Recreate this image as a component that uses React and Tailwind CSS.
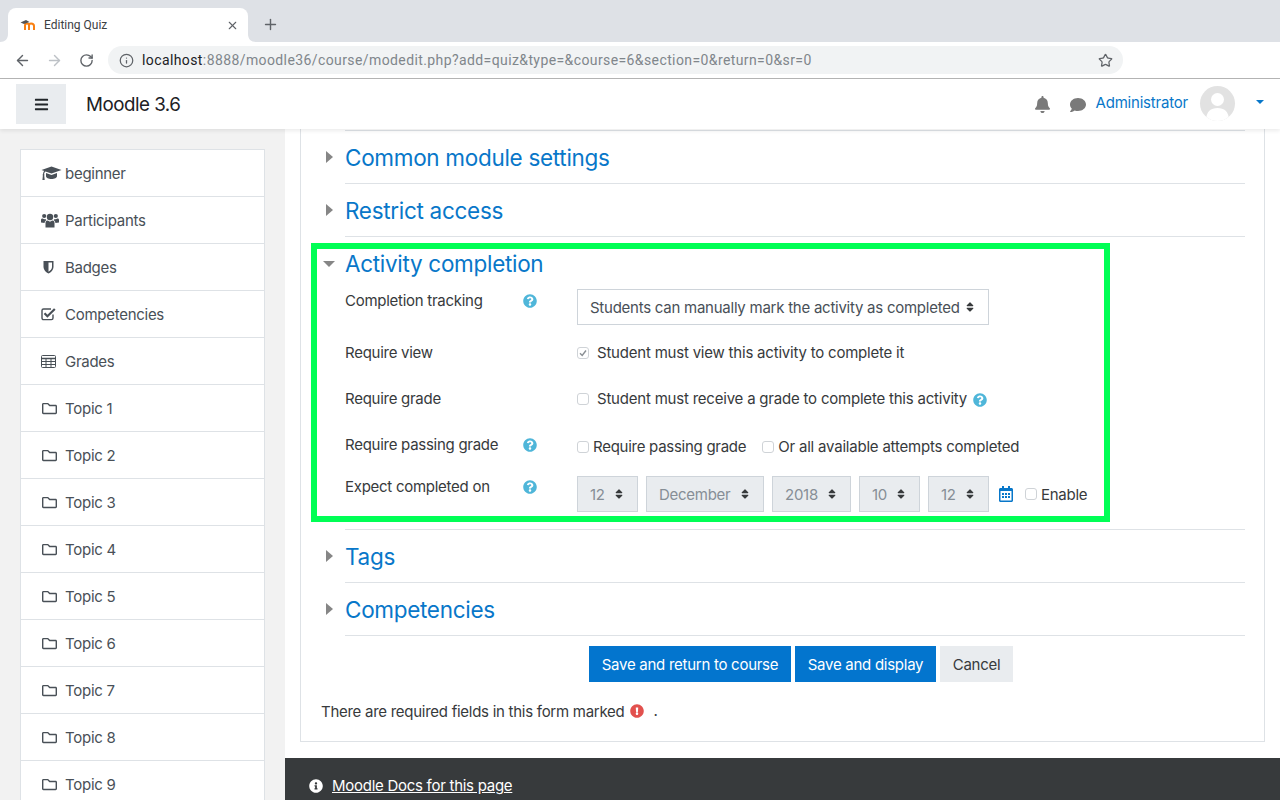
import {
  FaBars,
  FaBell,
  FaComment,
  FaExclamationCircle,
  FaInfoCircle,
  FaQuestionCircle,
  FaRegCalendarAlt,
  FaRegFolder,
  FaSort,
} from "react-icons/fa";
import { ArrowLeft, ArrowRight, Info, Plus, RotateCw, Star, X } from "lucide-react";

const CapIcon = () => (
  <svg width="21" height="15" viewBox="0 0 21 15" fill="#495057">
    <path d="M0.5 4 10.5 0.5 20.5 4 10.5 7.5 4.5 5.4C3.6 6 3.2 7 3.1 8.3 3.6 8.6 3.6 9.2 3.2 9.5L3.7 14H1.4L1.9 9.5C1.5 9.2 1.5 8.6 2 8.3 2.1 6.8 2.5 5.7 3.3 5Z" />
    <path d="M5 7 10.5 9 16 7V10.2C16 11.8 13.5 13 10.5 13S5 11.8 5 10.2Z" />
  </svg>
);

const UsersIcon = () => (
  <svg width="18" height="15" viewBox="0 0 18 15" fill="#495057">
    <circle cx="9" cy="4" r="3.2" />
    <circle cx="3.2" cy="3" r="2.1" />
    <circle cx="14.8" cy="3" r="2.1" />
    <path d="M4.5 14.5V10C4.5 8.2 5.6 7.5 6.8 7.5L9 8.8 11.2 7.5C12.4 7.5 13.5 8.2 13.5 10V14.5Z" />
    <path d="M0 9.5V7C0 6 .8 5.6 1.6 5.6L3.2 6.3 4.4 6.1C4.8 6.8 5 7 5.4 7.2 4.2 7.6 3.7 8.6 3.6 10Z" />
    <path d="M18 9.5V7C18 6 17.2 5.6 16.4 5.6L14.8 6.3 13.6 6.1C13.2 6.8 13 7 12.6 7.2 13.8 7.6 14.3 8.6 14.4 10Z" />
  </svg>
);

const ShieldIcon = () => (
  <svg width="11" height="14" viewBox="0 0 11 14">
    <path d="M0.5 1H10.5V7C10.5 10 8 12.3 5.5 13.5 3 12.3 0.5 10 0.5 7Z" fill="#495057" />
    <path d="M5.5 2.5H9V7C9 9 7.3 10.7 5.5 11.8Z" fill="#fff" />
  </svg>
);

const CheckSquareIcon = () => (
  <svg width="16" height="14" viewBox="0 0 16 14" fill="none">
    <path d="M12 7.5V11C12 12 11.4 12.6 10.4 12.6H2.6C1.6 12.6 1 12 1 11V3.6C1 2.6 1.6 2 2.6 2H10" stroke="#495057" strokeWidth="1.4" />
    <path d="M3.5 6.2 6.4 9.2 13.8 2" stroke="#495057" strokeWidth="2.2" />
  </svg>
);

const TableIcon = () => (
  <svg width="15" height="13" viewBox="0 0 15 13" fill="none" stroke="#495057">
    <rect x="0.5" y="0.5" width="14" height="12" rx="1" />
    <path d="M0.5 3.5H14.5" strokeWidth="1.5" />
    <path d="M0.5 6.5H14.5M0.5 9.5H14.5M5 3.5V12.5M10 3.5V12.5" />
  </svg>
);

const navItems = [
  { label: "beginner", icon: <CapIcon /> },
  { label: "Participants", icon: <UsersIcon /> },
  { label: "Badges", icon: <span className="ml-[2px]"><ShieldIcon /></span> },
  { label: "Competencies", icon: <CheckSquareIcon /> },
  { label: "Grades", icon: <TableIcon /> },
  ...["1", "2", "3", "4", "5", "6", "7", "8", "9"].map((n) => ({
    label: "Topic " + n,
    icon: <FaRegFolder className="text-[15px] ml-px" />,
  })),
];

const Help = () => <FaQuestionCircle className="text-[14px] text-[#4fb6d9]" />;

const Checkbox = ({ checked }) => (
  <span className="w-[12px] h-[12px] rounded-[3px] border border-[#cfd3d7] bg-white flex items-center justify-center shrink-0">
    {checked && (
      <svg width="10" height="10" viewBox="0 0 10 10">
        <path d="M2 5.2 4.2 7.5 8 2.5" fill="none" stroke="#8a8f94" strokeWidth="1.4" />
      </svg>
    )}
  </span>
);

const DateSelect = ({ value, width }) => (
  <div className={`${width} h-[36px] bg-[#e9ecef] border border-[#ced4da] flex items-center justify-between pl-[12px] pr-[12px] text-[#868e96]`}>
    <span className="pt-[2px]">{value}</span>
    <FaSort className="text-[12px] text-[#373a3c]" />
  </div>
);

const Section = ({ title }) => (
  <div className="ml-[44px] mr-[19px] h-[53px] border-b border-[#dee2e6] flex items-center relative">
    <span className="absolute left-[-19px] top-[20px] w-0 h-0 border-y-[6px] border-y-transparent border-l-[7px] border-l-[#868686]" />
    <span className="text-[22.5px] tracking-[-0.3px] text-[#0877c9] leading-none pt-[2px]">{title}</span>
  </div>
);

const Row = ({ label, help, height, children }) => (
  <div className={`flex ${height}`}>
    <div className="w-[232px] flex justify-between pr-[40px]">
      <span className="leading-[22.5px] pt-px">{label}</span>
      {help && (
        <span className="mt-[5px]">
          <Help />
        </span>
      )}
    </div>
    {children}
  </div>
);

export default function App() {
  return (
    <div className="h-screen overflow-hidden flex flex-col bg-white font-['Inter',sans-serif] text-[15px] tracking-[-0.27px] text-[#373a3c]">
      {/* browser tabs */}
      <div className="h-[42px] bg-[#dee1e6] flex items-end pl-[8px] shrink-0">
        <div className="w-[240px] h-[34px] bg-white rounded-t-[8px] flex items-center pl-[12px] pr-[9px] relative">
          <svg width="8" height="8" viewBox="0 0 8 8" className="absolute left-[-8px] bottom-0">
            <path d="M8 0V8H0C5 8 8 5 8 0Z" fill="#fff" />
          </svg>
          <svg width="8" height="8" viewBox="0 0 8 8" className="absolute right-[-8px] bottom-0">
            <path d="M0 0V8H8C3 8 0 5 0 0Z" fill="#fff" />
          </svg>
          <svg width="16" height="12" viewBox="0 0 16 12" className="mr-[8px]">
            <path d="M5 11V6.5C5 5 6 4.5 7 4.5S9 5 9 6.5V11M9 6.5C9 5 10 4.5 11 4.5S14 5 14 7V11" fill="none" stroke="#f98012" strokeWidth="2" />
            <path d="M0.5 3.5 6 1 9.5 3 4 5Z" fill="#555" />
          </svg>
          <span className="text-[12px] tracking-normal text-[#3c4043] font-['Roboto',sans-serif]">Editing Quiz</span>
          <X size={13} strokeWidth={2} className="ml-auto text-[#5f6368]" />
        </div>
        <Plus size={17} strokeWidth={2} className="ml-[14px] mb-[9px] text-[#5f6368]" />
      </div>
      {/* browser toolbar */}
      <div className="h-[37px] bg-white border-b border-[#b5b5b5] flex items-center pl-[14px] pr-[157px] shrink-0">
        <ArrowLeft size={17} strokeWidth={2} className="text-[#5f6368]" />
        <ArrowRight size={17} strokeWidth={2} className="ml-[15px] text-[#bdc1c6]" />
        <RotateCw size={15} strokeWidth={2.2} className="ml-[16px] text-[#5f6368]" />
        <div className="ml-[14px] w-[1015px] h-[28px] rounded-full bg-[#f1f3f4] flex items-center pl-[11px] pr-[10px] shrink-0">
          <Info size={15} strokeWidth={2} className="text-[#5f6368]" />
          <span className="ml-[8px] text-[14px] tracking-[0.4px] text-[#202124] font-['Roboto',sans-serif]">
            localhost<span className="text-[#80868b]">:8888/moodle36/course/modedit.php?add=quiz&amp;type=&amp;course=6&amp;section=0&amp;return=0&amp;sr=0</span>
          </span>
          <Star size={15} strokeWidth={2} className="ml-auto text-[#5f6368]" />
        </div>
      </div>
      {/* moodle navbar */}
      <div className="h-[50px] bg-white flex items-center pl-[16px] pr-[16px] shadow-[0_2px_4px_rgba(0,0,0,0.08)] relative z-10 shrink-0">
        <div className="w-[50px] h-[40px] bg-[#e9ecef] flex items-center justify-center">
          <FaBars className="text-[15px] text-[#212529]" />
        </div>
        <span className="ml-[20px] text-[18.75px] tracking-[-0.5px] text-[#1d2125] pt-[3px]">Moodle 3.6</span>
        <FaBell className="ml-auto text-[17px] text-[#7a7a7a]" />
        <FaComment className="ml-[19px] text-[16px] text-[#7a7a7a] mt-[2px]" />
        <span className="ml-[10px] text-[#0877c9] -mt-[1px] tracking-[-0.2px]">Administrator</span>
        <span className="ml-[12px] w-[35px] h-[35px] rounded-full bg-[#e2e2e2] overflow-hidden -mt-[2px]">
          <svg width="35" height="35" viewBox="0 0 35 35">
            <circle cx="17.5" cy="13.5" r="6.5" fill="#fff" />
            <path d="M6 35C6 25 11 22 17.5 22S29 25 29 35Z" fill="#fff" />
          </svg>
        </span>
        <span className="ml-[21px] w-0 h-0 border-x-[4px] border-x-transparent border-t-[4px] border-t-[#0877c9] -mt-[5px]" />
      </div>
      {/* page body */}
      <div className="flex-1 flex min-h-0">
        <div className="w-[285px] bg-[#f2f2f2] px-[20px] pt-[20px] shrink-0 overflow-hidden">
          <div className="border border-[#dee2e6] bg-white">
            {navItems.map((item) => (
              <div key={item.label} className="h-[47px] border-b border-[#dee2e6] flex items-center pl-[20px] text-[#495057]">
                <span className="w-[24px] flex items-center">{item.icon}</span>
                <span className="pt-[2px]">{item.label}</span>
              </div>
            ))}
          </div>
        </div>
        <div className="flex-1 flex flex-col min-w-0">
          <div className="mx-[15px] border border-t-0 border-[#dee2e6] pt-px">
            <div className="ml-[44px] mr-[19px] border-t border-[#dee2e6]" />
            <Section title="Common module settings" />
            <Section title="Restrict access" />
            {/* activity completion */}
            <div className="ml-[44px] mr-[19px] h-[293px] border-b border-[#dee2e6] relative">
              <span className="absolute left-[-22px] top-[24px] w-0 h-0 border-x-[6px] border-x-transparent border-t-[6px] border-t-[#868686]" />
              <div className="h-[52px] flex items-center">
                <span className="text-[22.5px] tracking-[-0.3px] text-[#0877c9] leading-none pt-[2px]">Activity completion</span>
              </div>
              <Row label="Completion tracking" help height="h-[52px]">
                <div className="w-[412px] h-[36px] border border-[#ced4da] flex items-center justify-between pl-[12px] pr-[12px] text-[#495057]">
                  <span className="whitespace-nowrap pt-[2px] tracking-[-0.25px]">Students can manually mark the activity as completed</span>
                  <FaSort className="text-[12px] text-[#373a3c]" />
                </div>
              </Row>
              <Row label="Require view" height="h-[46px]">
                <div className="flex items-center h-[22.5px] pt-px">
                  <Checkbox checked />
                  <span className="ml-[8px] tracking-[-0.21px]">Student must view this activity to complete it</span>
                </div>
              </Row>
              <Row label="Require grade" height="h-[46px]">
                <div className="flex items-center h-[22.5px] pt-px">
                  <Checkbox />
                  <span className="ml-[8px] tracking-[-0.21px]">Student must receive a grade to complete this activity</span>
                  <span className="ml-[6px] mt-[2px]">
                    <Help />
                  </span>
                </div>
              </Row>
              <Row label="Require passing grade" help height="h-[42px]">
                <div className="flex items-center h-[22.5px] mt-[3px]">
                  <Checkbox />
                  <span className="ml-[4px]">Require passing grade</span>
                  <span className="ml-[16px]">
                    <Checkbox />
                  </span>
                  <span className="ml-[4px] tracking-[-0.21px]">Or all available attempts completed</span>
                </div>
              </Row>
              <Row label="Expect completed on" help height="h-[54px]">
                <div className="flex items-center h-[36px] mt-px">
                  <DateSelect value="12" width="w-[61px]" />
                  <div className="ml-[8px]">
                    <DateSelect value="December" width="w-[118px]" />
                  </div>
                  <div className="ml-[8px]">
                    <DateSelect value="2018" width="w-[79px]" />
                  </div>
                  <div className="ml-[8px]">
                    <DateSelect value="10" width="w-[61px]" />
                  </div>
                  <div className="ml-[8px]">
                    <DateSelect value="12" width="w-[61px]" />
                  </div>
                  <FaRegCalendarAlt className="ml-[9px] text-[16px] text-[#0877c9]" />
                  <span className="ml-[11px]">
                    <Checkbox />
                  </span>
                  <span className="ml-[4px] pt-[2px]">Enable</span>
                </div>
              </Row>
              {/* green highlight drawn over the screenshot */}
              <div className="absolute left-[-34px] top-[6px] w-[799px] h-[279px] border-[6px] border-[#00ff55] pointer-events-none" />
            </div>
            <Section title="Tags" />
            <Section title="Competencies" />
            <div className="flex gap-[4px] mt-[10px] pl-[288px]">
              <div className="h-[36px] w-[202px] pt-[2px] justify-center bg-[#0375ce] text-white flex items-center">Save and return to course</div>
              <div className="h-[36px] w-[141px] pt-[2px] justify-center bg-[#0375ce] text-white flex items-center">Save and display</div>
              <div className="h-[36px] w-[73px] pt-[2px] justify-center bg-[#e9ecef] flex items-center">Cancel</div>
            </div>
            <div className="flex items-center h-[22.5px] pl-[20px] mt-[18px] mb-[18px]">
              <span className="pt-px">There are required fields in this form marked</span>
              <FaExclamationCircle className="ml-[6px] text-[14px] text-[#e2514e]" />
              <span className="ml-[9px]">.</span>
            </div>
          </div>
          <div className="mt-[16px] flex-1 bg-[#373a3c] pl-[24px] pt-[17px] text-white flex items-start">
            <div className="flex items-center h-[22.5px]">
              <FaInfoCircle className="text-[14px]" />
              <span className="ml-[9px] underline">Moodle Docs for this page</span>
            </div>
          </div>
        </div>
      </div>
    </div>
  );
}
